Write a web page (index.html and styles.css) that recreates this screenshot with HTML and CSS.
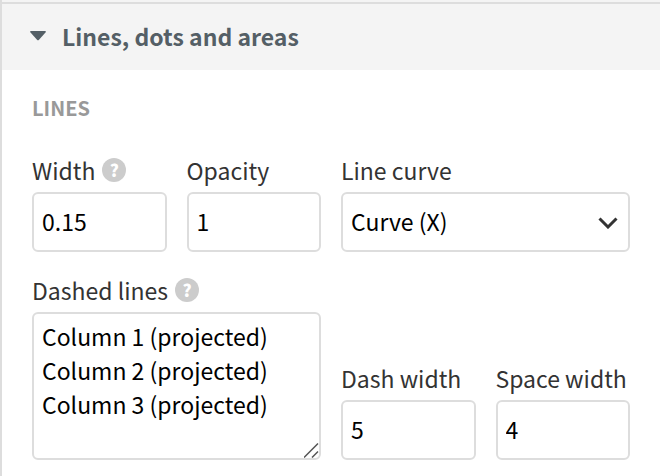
FILE: index.html
```html
<!doctype html>
<html lang="en">
<head>
<meta charset="utf-8">
<title>Lines, dots and areas</title>
<link rel="stylesheet" href="styles.css">
</head>

<body>
<div class="panel">
	<h2 class="panel_head">
		<button type="button" class="toggle" aria-expanded="true">
			<svg class="arrow" width="16" height="10" viewBox="0 0 16 10"><path d="M1 0H15Q16.500 .3 15.500 1.600L9 8.800Q8 9.800 7 8.800L.5 1.600Q-.5 .3 1 0Z" fill="#545f66"/></svg>
			<span>Lines, dots and areas</span>
		</button>
	</h2>

	<form class="panel_body">
		<h3 class="group_title">LINES</h3>
		<div class="fields">
			<div class="field">
				<div class="label_row">
					<label for="width">Width</label>
					<button type="button" class="help">?</button>
				</div>
				<input type="text" id="width" value="0.15">
			</div>
			<div class="field">
				<div class="label_row"><label for="opacity">Opacity</label></div>
				<input type="text" id="opacity" value="1">
			</div>
			<div class="field wide">
				<div class="label_row"><label for="curve">Line curve</label></div>
				<select id="curve">
					<option>Curve (X)</option>
				</select>
			</div>

			<div class="field wide">
				<div class="label_row">
					<label for="dashed">Dashed lines</label>
					<button type="button" class="help">?</button>
				</div>
				<textarea id="dashed">Column 1 (projected)
Column 2 (projected)
Column 3 (projected)</textarea>
			</div>
			<div class="field">
				<div class="label_row"><label for="dash">Dash width</label></div>
				<input type="text" id="dash" value="5">
			</div>
			<div class="field">
				<div class="label_row"><label for="space">Space width</label></div>
				<input type="text" id="space" value="4">
			</div>
		</div>
	</form>
</div>
</body>
</html>
```

FILE: styles.css
```css
*{ margin:0; padding:0; box-sizing:border-box;}
body{ background:#fff; color:#333; font-family:"Noto Sans CJK SC",sans-serif; font-size:23px; line-height:32px;}

.panel{ min-height:100vh; border-left:2px solid #ddd;}
.panel:before{ content:""; display:block; height:2px; background:#f4f4f4;}

.panel_head{ border-top:2px solid #ddd; background:#f4f4f4;}
.toggle{ display:flex; align-items:center; gap:16px; width:100%; padding:15px 28px 17px; border:none; background:none; color:#545f66; font:bold 23px/34px "Noto Sans CJK SC",sans-serif; text-align:left; cursor:pointer;}

.panel_body{ padding:22px 30px 16px;}
.group_title{ margin-bottom:30px; color:#999; font-size:20px; line-height:32px;}

.fields{ display:grid; grid-template-columns:repeat(4,1fr); gap:22px 20px; align-items:end;}
.field{ display:flex; flex-direction:column; gap:6px; min-width:0;}
.wide{ grid-column:span 2;}
.label_row{ display:flex; align-items:center; gap:7px; height:32px; white-space:nowrap;}

.help{ width:24px; height:24px; border:none; border-radius:50%; background:#ccc; color:#fff; font:900 17px/24px "Noto Sans CJK SC",sans-serif; text-align:center; cursor:pointer;}

input,select,textarea{ width:100%; height:60px; padding:0 8px 2px; border:2px solid #ddd; border-radius:6px; background:#fff; color:#000; font:23px/34px "Noto Sans CJK SC",sans-serif;}
select{ appearance:none; background:#fff url("data:image/svg+xml,%3Csvg xmlns='http://www.w3.org/2000/svg' width='20' height='12' viewBox='0 0 20 12'%3E%3Cpath d='M1.500 1.500L10 10L18.500 1.500' fill='none' stroke='%23333' stroke-width='3'/%3E%3C/svg%3E") no-repeat right 10px top 23px;}
textarea{ display:block; height:148px; padding:5px 8px; resize:vertical;}
textarea::-webkit-resizer{ background:url("data:image/svg+xml,%3Csvg xmlns='http://www.w3.org/2000/svg' width='15' height='15' viewBox='0 0 15 15'%3E%3Cpath d='M0 14.500L14 .5M8 14.500L14 8.500' fill='none' stroke='%23555' stroke-width='1.500'/%3E%3C/svg%3E") no-repeat right bottom;}
```
